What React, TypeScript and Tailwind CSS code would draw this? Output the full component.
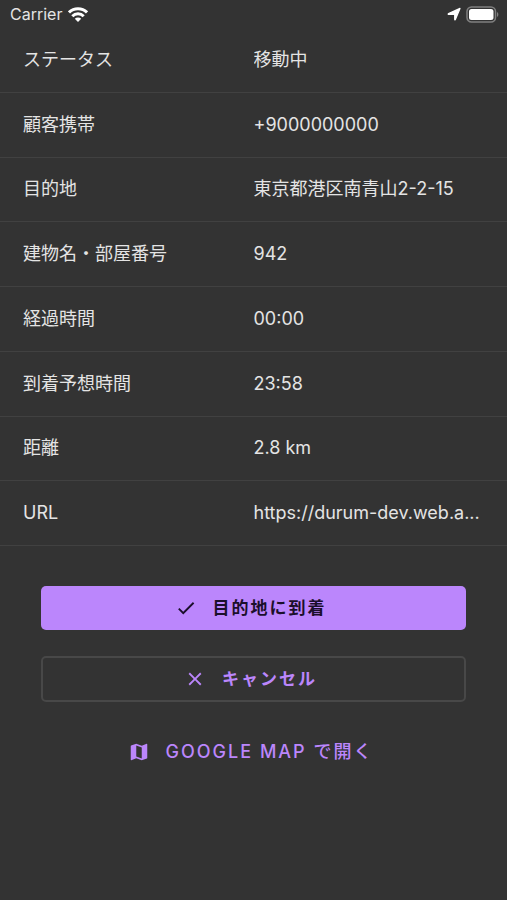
import { MdCheck, MdClose, MdMap } from "react-icons/md";

interface DetailRow {
  label: string;
  value: string;
}

const rows: DetailRow[] = [
  { label: "ステータス", value: "移動中" },
  { label: "顧客携帯", value: "+9000000000" },
  { label: "目的地", value: "東京都港区南青山2-2-15" },
  { label: "建物名・部屋番号", value: "942" },
  { label: "経過時間", value: "00:00" },
  { label: "到着予想時間", value: "23:58" },
  { label: "距離", value: "2.8 km" },
  { label: "URL", value: "https://durum-dev.web.a..." },
];

function WifiIcon() {
  return (
    <svg width="20" height="15" viewBox="0 0 20 15" fill="none" stroke="#fff" strokeWidth="3" aria-hidden="true">
      <path d="M1 5.4a12.8 12.8 0 0 1 18 0" />
      <path d="M4.3 9.2a8.1 8.1 0 0 1 11.4 0" />
      <path d="M10 15 6.8 11.8a4.5 4.5 0 0 1 6.4 0z" fill="#fff" stroke="none" />
    </svg>
  );
}

function StatusBar() {
  return (
    <header className="flex h-7 items-center justify-between pr-2 pl-[10px] text-[#e4e4e4]">
      <div className="flex items-center gap-[6px] text-base leading-7">
        <span>Carrier</span>
        <WifiIcon />
      </div>
      <div className="flex items-center gap-[5px]">
        <svg width="14" height="14" viewBox="0 0 14 14" fill="#fff" aria-hidden="true">
          <path d="M13 1.4 8.4 12.6c-.2.5-.7.4-.7-.1V7.5H1.7c-.6 0-.7-.6-.1-.9z" stroke="#fff" strokeWidth="1.2" strokeLinejoin="round" />
        </svg>
        <svg width="33" height="17" viewBox="0 0 33 17" aria-hidden="true">
          <rect x="1" y="1" width="28.5" height="15" rx="4.5" fill="none" stroke="#808080" strokeWidth="1.5" />
          <rect x="3" y="3" width="24.5" height="11" rx="2.5" fill="#fff" />
          <path d="M31 6v5c1.8-.8 1.8-4.2 0-5z" fill="#808080" />
        </svg>
      </div>
    </header>
  );
}

export default function App() {
  return (
    <div className="min-h-screen bg-[#333333] font-['Inter','Noto_Sans_CJK_JP',sans-serif]">
      <StatusBar />

      <main>
        <table className="h-[518px] w-full table-fixed border-separate border-spacing-0 text-left text-lg leading-6 text-[#e4e4e4]">
          <tbody>
            {rows.map((row) => (
              <tr key={row.label}>
                <th scope="row" className="w-1/2 border-b border-[#414141] pl-[23px] font-normal">
                  {row.label}
                </th>
                <td className="truncate border-b border-[#414141] pr-5">{row.value}</td>
              </tr>
            ))}
          </tbody>
        </table>

        <div className="flex flex-col px-[41px] pt-10 text-[17px] leading-6 tracking-[2px] text-[#bb86fc]">
          <button
            type="button"
            className="flex h-11 items-center justify-center gap-4 rounded-[5px] bg-[#bb86fc] pr-1.5 font-bold text-[#1b0f2b]"
          >
            <MdCheck size={22} />
            目的地に到着
          </button>
          <button
            type="button"
            className="mt-[26px] flex h-[46px] items-center justify-center gap-4 rounded-[5px] border-2 border-[#484848] pr-1.5 font-bold"
          >
            <MdClose size={22} />
            キャンセル
          </button>
          <button type="button" className="mt-7 flex h-11 items-center justify-center gap-4 pr-1.5 text-lg leading-6 font-medium tracking-[2px]">
            <MdMap size={22} />
            GOOGLE MAP で開く
          </button>
        </div>
      </main>
    </div>
  );
}
